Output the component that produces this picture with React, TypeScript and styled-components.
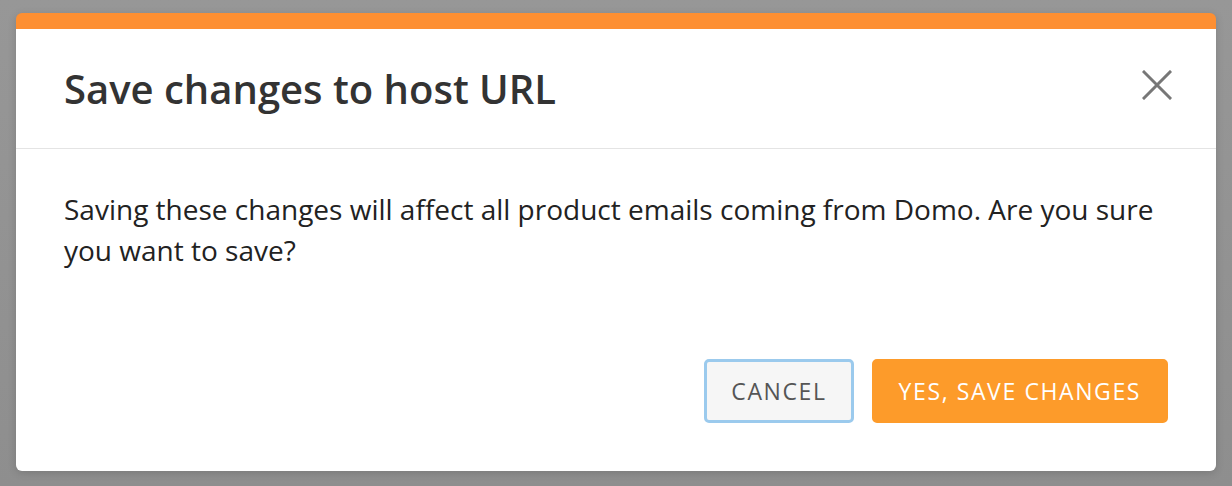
import styled, { createGlobalStyle } from 'styled-components';

const GlobalStyle = createGlobalStyle`
  html, body {
    margin: 0;
    padding: 0;
    background: #929292;
  }
  body {
    font-family: 'Open Sans', 'Liberation Sans', sans-serif;
  }
`;

const Backdrop = styled.div`
  box-sizing: border-box;
  height: 486px;
  padding: 13px 16px 15px;
  background: linear-gradient(#979797, #8e8e8e);
`;

const Dialog = styled.div`
  display: flex;
  flex-direction: column;
  width: 1200px;
  height: 458px;
  background: #fff;
  border-radius: 6px;
  border-top: 16px solid #fd8f32;
  box-sizing: border-box;
  overflow: hidden;
  box-shadow: 0 2px 8px rgba(0, 0, 0, 0.15);
`;

const Header = styled.div`
  display: flex;
  align-items: center;
  justify-content: space-between;
  height: 120px;
  padding: 0 44px 0 48px;
  border-bottom: 1.5px solid #e4e4e4;
  box-sizing: border-box;
`;

const Title = styled.h2`
  margin: 0;
  font-size: 40px;
  font-weight: 600;
  color: #333;
`;

const CloseButton = styled.button`
  display: flex;
  padding: 0;
  border: 0;
  background: none;
  cursor: pointer;
  margin-top: -8px;
`;

const Body = styled.div`
  display: flex;
  flex: 1;
  flex-direction: column;
  justify-content: space-between;
  padding: 40px 48px 48px;
`;

const Message = styled.p`
  margin: 0;
  font-size: 28px;
  line-height: 41px;
  color: #222;
`;

const Actions = styled.div`
  display: flex;
  justify-content: flex-end;
  gap: 18px;
`;

const Button = styled.button<{ $primary?: boolean }>`
  height: 64px;
  padding: 0 24px;
  border-radius: 5px;
  font-family: 'Open Sans', 'Liberation Sans', sans-serif;
  font-size: 23px;
  font-weight: 500;
  letter-spacing: 1.6px;
  text-transform: uppercase;
  cursor: pointer;
  box-sizing: border-box;
  border: 3px solid ${p => (p.$primary ? '#fd9b2a' : '#9bcaed')};
  background: ${p => (p.$primary ? '#fd9b2a' : '#f6f6f6')};
  color: ${p => (p.$primary ? '#fff' : '#555')};
`;

const CloseIcon = () => (
  <svg width="30" height="30" viewBox="0 0 30 30">
    <path d="M2 2 L28 28 M28 2 L2 28" stroke="#777" strokeWidth="3" strokeLinecap="square" />
  </svg>
);

export default function App() {
  return (
    <>
      <GlobalStyle />
      <Backdrop>
        <Dialog>
          <Header>
            <Title>Save changes to host URL</Title>
            <CloseButton aria-label="Close">
              <CloseIcon />
            </CloseButton>
          </Header>
          <Body>
            <Message>
              Saving these changes will affect all product emails coming from Domo. Are you sure
              you want to save?
            </Message>
            <Actions>
              <Button>Cancel</Button>
              <Button $primary>Yes, save changes</Button>
            </Actions>
          </Body>
        </Dialog>
      </Backdrop>
    </>
  );
}
